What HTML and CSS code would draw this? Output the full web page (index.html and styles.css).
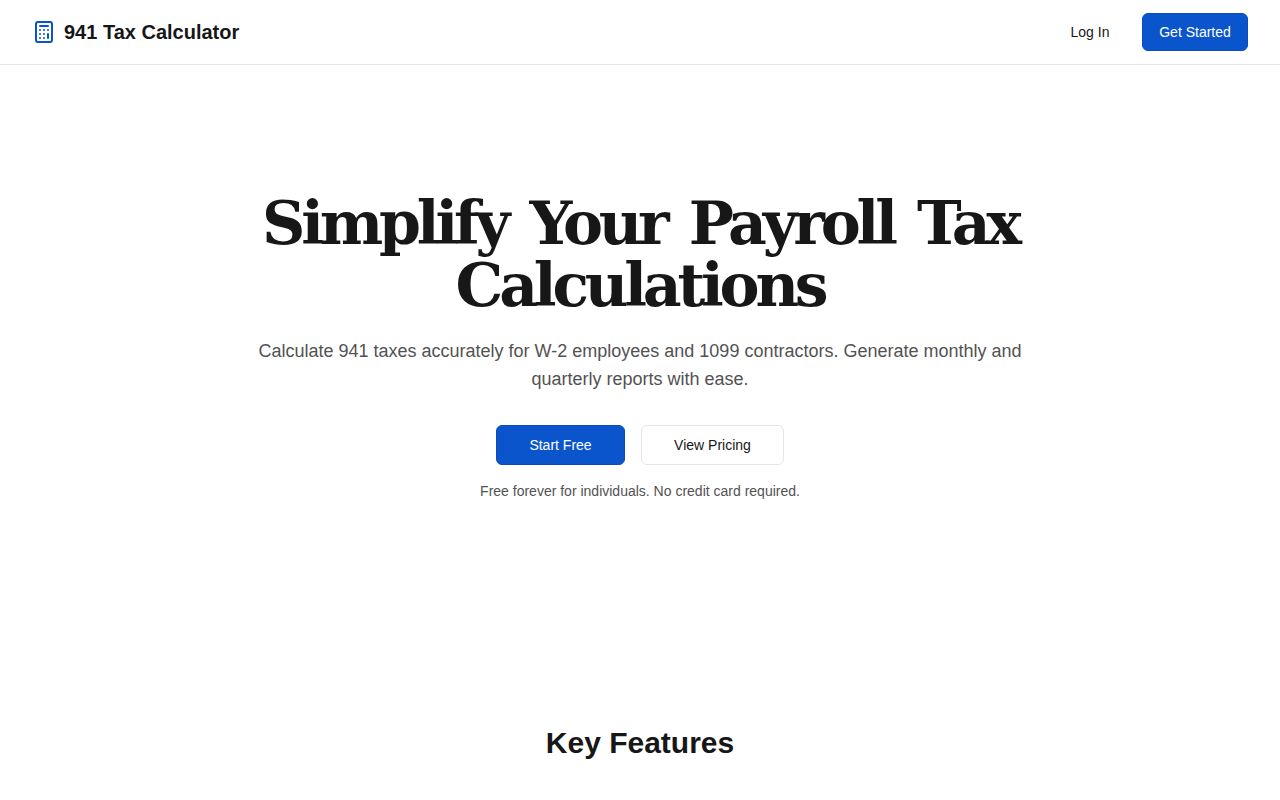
FILE: index.html
```html
<!DOCTYPE html>
<html lang="en">
<head>
<meta charset="utf-8">
<title>941 Tax Calculator</title>
<link rel="stylesheet" href="styles.css">
</head>
<body>
<header class="nav">
  <a class="brand" href="#">
    <svg class="brand-icon" viewBox="0 0 24 24" width="24" height="24" fill="none" stroke="currentColor" stroke-width="2" stroke-linecap="round" stroke-linejoin="round">
      <rect x="4" y="2" width="16" height="20" rx="2"></rect>
      <line x1="8" y1="6" x2="16" y2="6"></line>
      <line x1="16" y1="14" x2="16" y2="18"></line>
      <path d="M16 10h.01"></path><path d="M12 10h.01"></path><path d="M8 10h.01"></path>
      <path d="M12 14h.01"></path><path d="M8 14h.01"></path>
      <path d="M12 18h.01"></path><path d="M8 18h.01"></path>
    </svg>
    <span class="brand-name">941 Tax Calculator</span>
  </a>
  <nav class="nav-actions">
    <a class="btn btn-ghost" href="#">Log In</a>
    <a class="btn btn-primary btn-nav" href="#">Get Started</a>
  </nav>
</header>
<main>
  <section class="hero">
    <h1 class="hero-title">Simplify Your Payroll Tax Calculations</h1>
    <p class="hero-sub">Calculate 941 taxes accurately for W-2 employees and 1099 contractors. Generate monthly and quarterly reports with ease.</p>
    <div class="hero-actions">
      <a class="btn btn-primary btn-start" href="#">Start Free</a>
      <a class="btn btn-outline" href="#">View Pricing</a>
    </div>
    <p class="hero-note">Free forever for individuals. No credit card required.</p>
  </section>
  <section class="features">
    <h2 class="features-title">Key Features</h2>
  </section>
</main>
</body>
</html>
```
FILE: styles.css
```css
* { box-sizing: border-box; }
html, body { margin: 0; padding: 0; }
body {
  font-family: "Liberation Sans", Arial, sans-serif;
  color: #171717;
  background: #fff;
  overflow: hidden;
  height: 800px;
}
a { text-decoration: none; color: inherit; }
.nav {
  display: flex;
  justify-content: space-between;
  align-items: center;
  height: 65px;
  padding: 0 32px;
  border-bottom: 1px solid #e5e5e5;
}
.brand { display: flex; align-items: center; gap: 8px; }
.brand-icon { color: #0b55cc; display: block; }
.brand-name { font-size: 20px; font-weight: 700; }
.nav-actions { display: flex; align-items: center; gap: 16px; }
.btn {
  display: inline-flex;
  align-items: center;
  justify-content: center;
  font-size: 14px;
  border-radius: 6px;
  border: 1px solid transparent;
}
.btn-ghost { width: 72px; height: 38px; color: #171717; }
.btn-primary { background: #0b55cc; border-color: #0a4db8; color: #fff; }
.btn-nav { width: 106px; height: 38px; }
.hero { padding: 127px 0 0; text-align: center; }
.hero-title {
  margin: 0 auto;
  width: 800px;
  font-family: "DejaVu Serif", Georgia, serif;
  font-size: 60px;
  line-height: 62px;
  font-weight: 700;
  letter-spacing: -4.2px;
  word-spacing: 6.5px;
  color: #171717;
}
.hero-sub {
  margin: 21px auto 0;
  width: 780px;
  font-size: 18px;
  line-height: 28px;
  color: #525252;
}
.hero-actions { display: flex; justify-content: center; gap: 16px; margin-top: 32px; }
.btn-start { width: 129px; height: 40px; }
.btn-outline { width: 143px; height: 40px; background: #fff; border-color: #e5e5e5; color: #171717; }
.hero-note { margin: 16px 0 0; font-size: 14px; line-height: 20px; color: #525252; }
.features { padding-top: 224px; text-align: center; }
.features-title { margin: 0; font-size: 30px; line-height: 36px; font-weight: 700; color: #171717; }
```
